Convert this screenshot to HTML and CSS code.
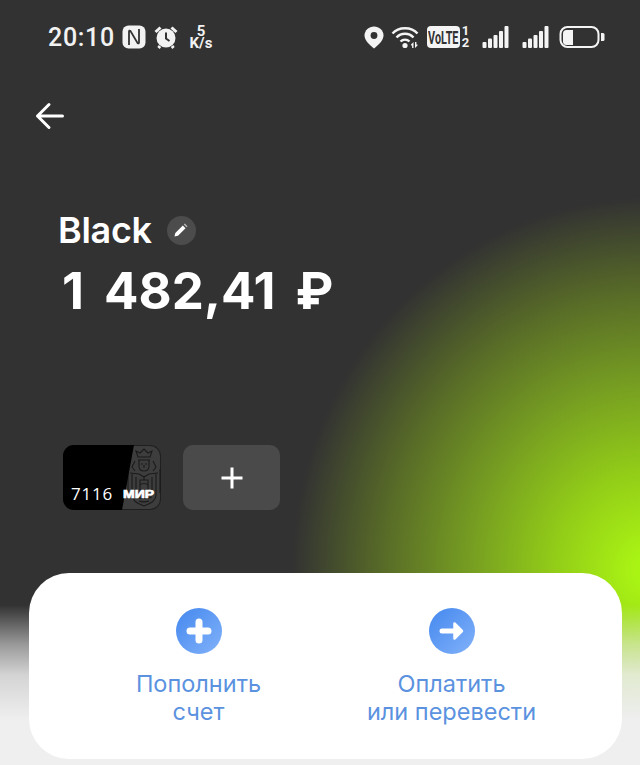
FILE: index.html
```html
<!DOCTYPE html>
<html lang="en">
<head>
    <meta charset="UTF-8">
    <meta name="viewport" content="width=device-width, initial-scale=1.0">
    <title>Black</title>
    <link rel="stylesheet" href="styles.css">
</head>
<body>
    <div class="page">
        <div class="status-bar">
            <div class="status-left">
                <span class="time">20:10</span>
                <svg class="nfc-icon" width="24" height="24" viewBox="0 0 24 24">
                    <rect x="0.500" y="0.500" width="23" height="23" rx="6" fill="#f2f2f2"/>
                    <path d="M7 20V6.800Q7 4.800 8.500 6L15.500 18Q17 19.200 17 17.200V4" fill="none" stroke="#323232" stroke-width="1.800"/>
                </svg>
                <svg class="alarm-icon" width="24" height="24" viewBox="0 0 24 24">
                    <circle cx="12" cy="13" r="9.500" fill="#f2f2f2"/>
                    <path d="M1.500 7 6.500 2.500M22.500 7 17.500 2.500M6 21l-1.500 2M18 21l1.500 2" stroke="#f2f2f2" stroke-width="3" fill="none"/>
                    <path d="M12 7.500V13.500l3.500 2.500" stroke="#323232" stroke-width="2" fill="none"/>
                </svg>
                <div class="speed"><span>5</span><span>K/s</span></div>
            </div>
            <div class="status-right">
                <svg width="20" height="24" viewBox="0 0 20 24">
                    <path d="M10 1.500c-5 0-9.500 3.800-9.500 9 0 5 5.500 9.800 9.500 13 4-3.200 9.500-8 9.500-13 0-5.200-4.500-9-9.500-9z" fill="#f4f4f4"/>
                    <circle cx="10" cy="10.500" r="3.400" fill="#323232"/>
                </svg>
                <svg class="wifi-icon" width="29" height="24" viewBox="0 0 29 24">
                    <g fill="none" stroke="#f4f4f4" stroke-width="2.400">
                        <path d="M1.500 8.500C7.500 1.500 20.500 1.500 26.500 8.500"/>
                        <path d="M5.500 12.500c4.500-5 12.500-5 17 0"/>
                        <path d="M9.500 16.500c2.500-2.500 6.500-2.500 9 0"/>
                    </g>
                    <circle cx="14" cy="20.500" r="2.600" fill="#f4f4f4"/>
                    <path d="M20 19.500l2.500-2.500v6h-1.400v-2.600h-1.100zM24 17h1.400v2.600h1.100v1L24 23z" fill="#f4f4f4"/>
                </svg>
                <div class="volte">
                    <span class="volte-badge"><span class="volte-text">VoLTE</span></span>
                    <div class="sim-nums"><span>1</span><span>2</span></div>
                </div>
                <svg class="signal" width="27" height="24" viewBox="0 0 27 24">
                    <g fill="#f4f4f4">
                        <rect x="0.500" y="17" width="4" height="6" rx="1"/>
                        <rect x="6" y="13.500" width="4" height="9.500" rx="1"/>
                        <rect x="11.500" y="10" width="4" height="13" rx="1"/>
                        <rect x="17" y="6" width="4" height="17" rx="1"/>
                        <rect x="22.500" y="1" width="4" height="22" rx="1"/>
                    </g>
                </svg>
                <svg class="signal" width="27" height="24" viewBox="0 0 27 24">
                    <g fill="#f4f4f4">
                        <rect x="0.500" y="17" width="4" height="6" rx="1"/>
                        <rect x="6" y="13.500" width="4" height="9.500" rx="1"/>
                        <rect x="11.500" y="10" width="4" height="13" rx="1"/>
                        <rect x="17" y="6" width="4" height="17" rx="1"/>
                        <rect x="22.500" y="1" width="4" height="22" rx="1"/>
                    </g>
                </svg>
                <svg class="battery" width="46" height="24" viewBox="0 0 46 24">
                    <rect x="1.500" y="2" width="38" height="20" rx="7" fill="none" stroke="#f4f4f4" stroke-width="2"/>
                    <path d="M7.500 5H14V20H7.500A3.500 3.500 0 0 1 4 16.500V8.500A3.500 3.500 0 0 1 7.500 5z" fill="#f4f4f4"/>
                    <path d="M42 8h2a1.500 1.500 0 0 1 1.500 1.500v5a1.500 1.500 0 0 1-1.500 1.500h-2z" fill="#f4f4f4"/>
                </svg>
            </div>
        </div>

        <div class="back-row">
            <svg width="32" height="32" viewBox="0 0 32 32">
                <path d="M27.500 16H2.500M14 4.500 2.500 16 14 27.500" fill="none" stroke="#fff" stroke-width="3" stroke-linecap="round" stroke-linejoin="round"/>
            </svg>
        </div>

        <div class="title-row">
            <span class="title">Black</span>
            <span class="edit-btn">
                <svg width="16" height="16" viewBox="0 0 16 16">
                    <path d="M1.500 14.500l.8-3.500 7.500-7.500 2.700 2.700L5 13.700z" fill="#fff"/>
                    <path d="M10.800 2.500l1-1 2.700 2.700-1 1z" fill="#bbb"/>
                </svg>
            </span>
        </div>
        <div class="balance">1 482,41 ₽</div>

        <div class="cards">
            <div class="bank-card">
                <svg class="card-emblem" width="34" height="62" viewBox="0 0 34 62">
                    <g fill="none" stroke="#1b1b1b" stroke-width="1.100">
                        <path d="M11 10 9 4l4 2 4-4 4 4 4-2-2 6z"/>
                        <path d="M11 13h12M12 13v6c0 3 2 5 5 5s5-2 5-5v-6"/>
                        <path d="M14 17h2M18 17h2M17 18v3"/>
                        <path d="M8 14 5 20l3 4M26 14l3 6-3 4"/>
                        <path d="M3 26l9 1 5 3 5-3 9-1"/>
                        <path d="M5 27v21c0 5 6 9 12 11 6-2 12-6 12-11V27"/>
                        <path d="M9 30v16M25 30v16"/>
                        <path d="M13 33h8v10h-8zM13 38c2-2 6-2 8 0M17 30v3"/>
                        <path d="M9 50c4 2 12 2 16 0M12 54c3 1 7 1 10 0"/>
                        <path d="M1 22v24M33 22v24"/>
                    </g>
                </svg>
                <div class="card-mask"></div>
                <span class="card-num">7116</span>
                <span class="card-mir">МИР</span>
            </div>
            <div class="add-card">
                <svg width="24" height="24" viewBox="0 0 24 24">
                    <path d="M12 1.500v21M1.500 12h21" stroke="#fff" stroke-width="3"/>
                </svg>
            </div>
        </div>

        <div class="actions">
            <div class="action">
                <span class="action-icon">
                    <svg width="26" height="26" viewBox="0 0 26 26">
                        <path d="M13 4v18M4 13h18" stroke="#fff" stroke-width="7" stroke-linecap="round"/>
                    </svg>
                </span>
                <span class="action-label">Пополнить<br>счет</span>
            </div>
            <div class="action">
                <span class="action-icon">
                    <svg width="26" height="26" viewBox="0 0 26 26">
                        <path d="M3 13h14" stroke="#fff" stroke-width="5" stroke-linecap="round"/>
                        <path d="M15.500 5.500 23 13l-7.500 7.500z" fill="#fff" stroke="#fff" stroke-width="2.500" stroke-linejoin="round"/>
                    </svg>
                </span>
                <span class="action-label">Оплатить<br>или перевести</span>
            </div>
        </div>
    </div>
</body>
</html>
```

FILE: styles.css
```css
html, body {
    height: 100%;
    margin: 0;
    overflow: hidden;
}
body {
    font-family: Inter, "Noto Sans", sans-serif;
    color: #fff;
}
.page {
    height: 765px;
    box-sizing: border-box;
    display: flex;
    flex-direction: column;
    padding-bottom: 6px;
    background:
        linear-gradient(to bottom, rgba(240, 240, 240, 0) 605px, rgba(240, 240, 240, 0.55) 645px, rgba(240, 240, 240, 0.85) 675px, #efefef 720px),
        radial-gradient(358px 372px at 650px 570px, #aaf414 0, #aaf414 4%, #92cc18 27%, #749a22 52%, #566828 76%, #323232 100%),
        #323232;
}

/* status bar */
.status-bar {
    height: 24px;
    margin-top: 25px;
    padding: 0 35px 0 48px;
    display: flex;
    justify-content: space-between;
    align-items: center;
}
.status-left, .status-right {
    display: flex;
    align-items: center;
}
.time {
    font-family: Roboto, sans-serif;
    font-size: 25px;
    font-weight: 500;
    letter-spacing: 0.7px;
    color: #f2f2f2;
}
.nfc-icon {
    margin-left: 7px;
}
.alarm-icon {
    margin-left: 8px;
}
.speed {
    margin-left: 10px;
    width: 26px;
    display: flex;
    flex-direction: column;
    align-items: center;
    font-family: Roboto, sans-serif;
    font-size: 15px;
    font-weight: 700;
    line-height: 12px;
    color: #f2f2f2;
}
.wifi-icon {
    margin-left: 7px;
}
.volte {
    margin-left: 7px;
    display: flex;
    align-items: center;
    gap: 2px;
}
.volte-badge {
    width: 33px;
    height: 22px;
    background: #f4f4f4;
    border-radius: 4px;
    display: flex;
    justify-content: center;
    align-items: center;
    overflow: hidden;
}
.volte-text {
    color: #323232;
    font-family: Roboto, sans-serif;
    font-size: 18px;
    font-weight: 700;
    transform: scaleX(0.6);
}
.sim-nums {
    width: 7px;
    display: flex;
    flex-direction: column;
    align-items: center;
    font-family: Roboto, sans-serif;
    font-size: 13px;
    font-weight: 700;
    line-height: 12px;
    color: #f4f4f4;
}
.signal {
    margin-left: 13px;
}
.battery {
    margin-left: 10px;
}

/* header */
.back-row {
    margin-top: 51px;
    padding-left: 35px;
    height: 32px;
}
.title-row {
    margin-top: 76px;
    padding-left: 58px;
    display: flex;
    align-items: center;
    gap: 15px;
    height: 44px;
}
.title {
    font-size: 36px;
    font-weight: 600;
    letter-spacing: -0.3px;
}
.edit-btn {
    width: 29px;
    height: 29px;
    border-radius: 50%;
    background: #4c4c4c;
    display: flex;
    justify-content: center;
    align-items: center;
}
.balance {
    margin-top: 9px;
    padding-left: 62px;
    font-size: 51px;
    font-weight: 700;
    line-height: 60px;
    word-spacing: 8px;
}

/* cards */
.cards {
    margin-top: 124px;
    padding-left: 63px;
    display: flex;
    gap: 22px;
}
.bank-card {
    position: relative;
    width: 98px;
    height: 65px;
    border-radius: 11px;
    background: #3d3d3d;
    overflow: hidden;
    box-shadow: inset 0 0 0 1px #1f1f1f;
}
.card-emblem {
    position: absolute;
    right: 0;
    top: 2px;
}
.card-mask {
    position: absolute;
    inset: 0;
    background: #000;
    clip-path: polygon(0 0, 71px 0, 59px 100%, 0 100%);
}
.card-num {
    position: absolute;
    left: 8px;
    bottom: 5px;
    font-family: "Open Sans", sans-serif;
    font-size: 17px;
    letter-spacing: 0.8px;
}
.card-mir {
    position: absolute;
    left: 60px;
    bottom: 10px;
    font-family: "Liberation Sans", sans-serif;
    font-size: 10px;
    line-height: 10px;
    font-weight: 700;
    -webkit-text-stroke: 0.6px #fff;
    transform: scaleX(1.4);
    transform-origin: left center;
}
.add-card {
    width: 97px;
    height: 65px;
    border-radius: 10px;
    background: #4a4a4a;
    display: flex;
    justify-content: center;
    align-items: center;
}

/* bottom panel */
.actions {
    margin: auto 18px 0 29px;
    height: 186px;
    box-sizing: border-box;
    padding: 35px 44px 0 43px;
    background: #fff;
    border-radius: 40px;
    display: grid;
    grid-template-columns: 1fr 1fr;
}
.action {
    display: flex;
    flex-direction: column;
    align-items: center;
    text-align: center;
}
.action-icon {
    width: 46px;
    height: 46px;
    border-radius: 50%;
    background: linear-gradient(135deg, #4488ee, #82b2fa);
    display: flex;
    justify-content: center;
    align-items: center;
}
.action-label {
    margin-top: 16px;
    font-size: 23.500px;
    line-height: 28px;
    color: #5b92e0;
}
```
